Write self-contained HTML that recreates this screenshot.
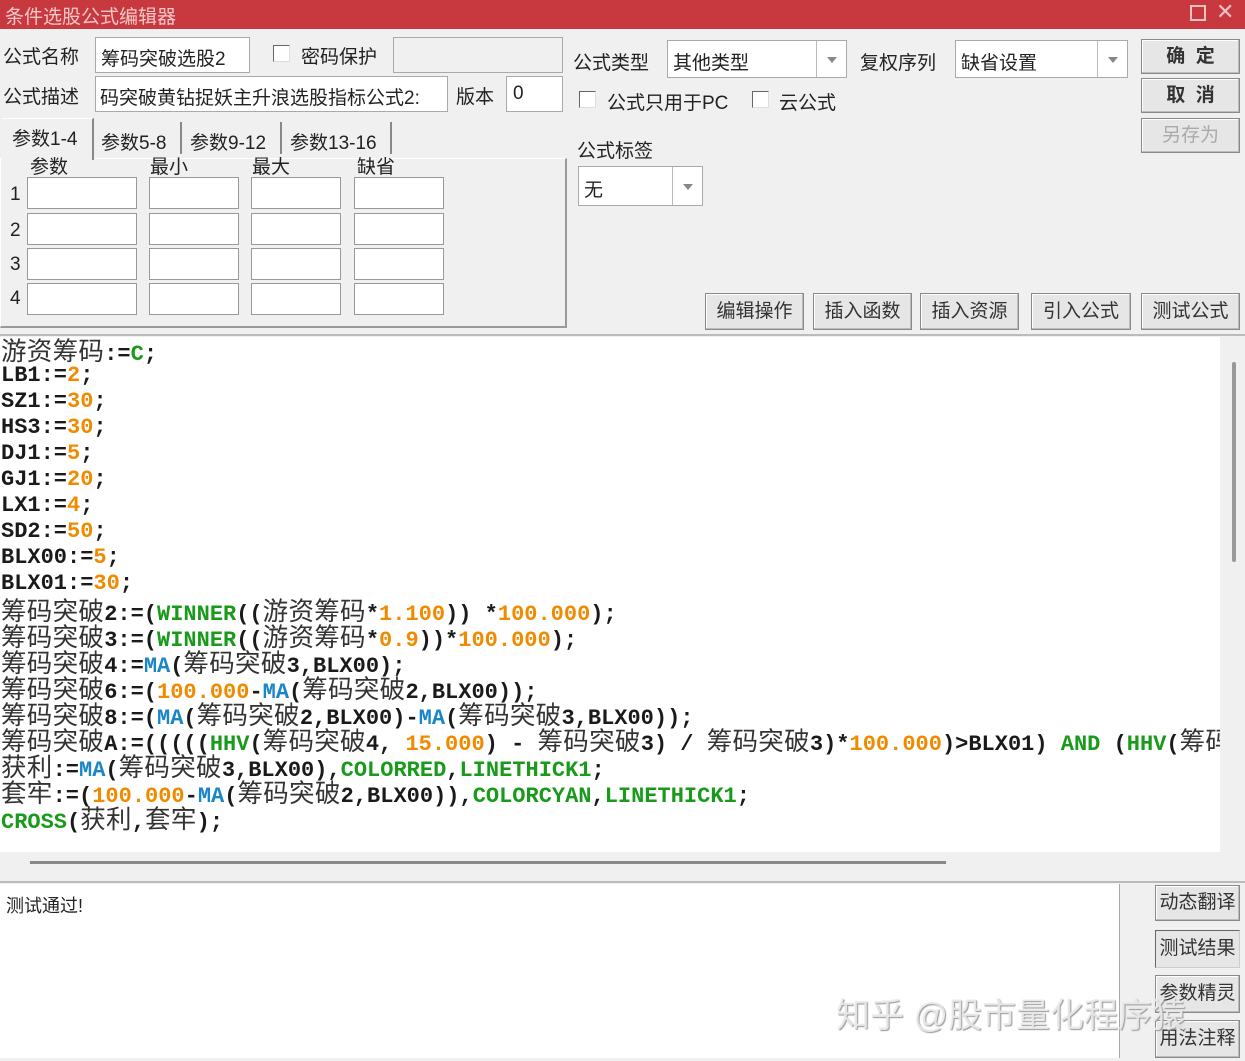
<!DOCTYPE html>
<html><head><meta charset="utf-8"><style>
*{margin:0;padding:0;box-sizing:border-box}
body{width:1245px;height:1061px;background:#f0f0f0;position:relative;overflow:hidden;font-family:"Liberation Sans","Microsoft YaHei","Noto Sans CJK SC",sans-serif;font-size:19px;color:#222}
.a{position:absolute;white-space:nowrap}
.in{position:absolute;background:#fff;border:1px solid #a9a9a9}
.btn{position:absolute;background:#e6e6e6;border:1px solid #8a8a8a;box-shadow:inset -1px -1px 0 #bdbdbd,inset 1px 1px 0 #fff;text-align:center;font-size:19px;color:#333}
.cb{position:absolute;width:17px;height:17px;border:1px solid #666;border-right-color:#ddd;border-bottom-color:#ddd;background:#fff}
.dd{position:absolute;top:0;right:0;width:30px;height:100%;border-left:1px solid #bbb}
.dd:after{content:"";position:absolute;left:10px;top:45%;border:5px solid transparent;border-top:6px solid #888}
#code{position:absolute;left:0;top:337px;width:1220px;height:515px;background:#fff;overflow:hidden;font-family:"Liberation Mono",monospace;font-weight:bold;font-size:22px;color:#1a1a1a}
#code div{height:26px;line-height:26px;white-space:nowrap;padding-left:1px;overflow:visible}
.c{font-family:"Noto Sans CJK SC",sans-serif;font-weight:normal;font-size:25.5px;color:#333;line-height:1;letter-spacing:0.3px}
.g{color:#1a9a1a}.o{color:#f08a00}.b{color:#1a86c8}
</style></head><body>
<div class="a" style="left:0;top:0;width:1245px;height:29px;background:#c8393f"></div>
<div class="a" style="left:5px;top:2px;color:#f4c8c8;font-size:19px">条件选股公式编辑器</div>
<div class="a" style="left:1190px;top:5px;width:16px;height:16px;border:2px solid #f0c0c0"></div>
<div class="a" style="left:1216px;top:-1px;color:#f0c0c0;font-size:22px">✕</div>

<div class="a" style="left:3px;top:42px">公式名称</div>
<div class="in" style="left:95px;top:37px;width:155px;height:36px"><span class="a" style="left:5px;top:6px">筹码突破选股2</span></div>
<div class="cb" style="left:273px;top:45px"></div>
<div class="a" style="left:301px;top:42px">密码保护</div>
<div class="in" style="left:393px;top:37px;width:170px;height:36px;background:#f0f0f0"></div>
<div class="a" style="left:3px;top:82px">公式描述</div>
<div class="in" style="left:95px;top:76px;width:353px;height:36px;overflow:hidden"><span class="a" style="left:4px;top:6px">码突破黄钻捉妖主升浪选股指标公式2:</span></div>
<div class="a" style="left:456px;top:82px">版本</div>
<div class="in" style="left:506px;top:76px;width:57px;height:36px"><span class="a" style="left:6px;top:6px">0</span></div>

<div class="a" style="left:0;top:158px;width:567px;height:170px;border:1px solid #fff;border-right:2px solid #999;border-bottom:2px solid #999"></div>
<div class="a" style="left:2px;top:118px;width:92px;height:42px;background:#f0f0f0;border-top:1px solid #fff;border-right:2px solid #888"></div>
<div class="a" style="left:12px;top:124px">参数1-4</div>
<div class="a" style="left:101px;top:128px">参数5-8</div>
<div class="a" style="left:180px;top:122px;height:32px;border-left:2px solid #888"></div>
<div class="a" style="left:190px;top:128px">参数9-12</div>
<div class="a" style="left:280px;top:122px;height:32px;border-left:2px solid #888"></div>
<div class="a" style="left:290px;top:128px">参数13-16</div>
<div class="a" style="left:390px;top:122px;height:32px;border-left:2px solid #888"></div>
<div class="a" style="left:30px;top:152px">参数</div>
<div class="a" style="left:150px;top:152px">最小</div>
<div class="a" style="left:252px;top:152px">最大</div>
<div class="a" style="left:357px;top:152px">缺省</div>
<div class="a" style="left:10px;top:184px">1</div>
<div class="a" style="left:10px;top:220px">2</div>
<div class="a" style="left:10px;top:254px">3</div>
<div class="a" style="left:10px;top:288px">4</div>
<div id="grid"></div>

<div class="a" style="left:573px;top:48px">公式类型</div>
<div class="in" style="left:667px;top:40px;width:180px;height:38px"><span class="a" style="left:5px;top:7px">其他类型</span><div class="dd"></div></div>
<div class="a" style="left:860px;top:48px">复权序列</div>
<div class="in" style="left:955px;top:40px;width:173px;height:38px"><span class="a" style="left:5px;top:7px">缺省设置</span><div class="dd"></div></div>
<div class="cb" style="left:579px;top:91px"></div>
<div class="a" style="left:607px;top:88px">公式只用于PC</div>
<div class="cb" style="left:752px;top:91px"></div>
<div class="a" style="left:779px;top:88px">云公式</div>
<div class="a" style="left:577px;top:136px">公式标签</div>
<div class="in" style="left:578px;top:166px;width:125px;height:40px"><span class="a" style="left:5px;top:8px">无</span><div class="dd"></div></div>

<div class="btn" style="left:1141px;top:39px;width:99px;height:35px;line-height:33px;font-weight:bold">确&nbsp; 定</div>
<div class="btn" style="left:1141px;top:78px;width:99px;height:35px;line-height:33px;font-weight:bold">取&nbsp; 消</div>
<div class="btn" style="left:1141px;top:118px;width:99px;height:35px;line-height:33px;color:#aaa">另存为</div>

<div class="btn" style="left:705px;top:293px;width:99px;height:37px;line-height:35px">编辑操作</div>
<div class="btn" style="left:813px;top:293px;width:99px;height:37px;line-height:35px">插入函数</div>
<div class="btn" style="left:920px;top:293px;width:99px;height:37px;line-height:35px">插入资源</div>
<div class="btn" style="left:1031px;top:293px;width:100px;height:37px;line-height:35px">引入公式</div>
<div class="btn" style="left:1141px;top:293px;width:99px;height:37px;line-height:35px">测试公式</div>
<div class="a" style="left:0;top:334px;width:1245px;border-top:2px solid #bbb"></div>

<div id="code">
<div><span class="c">游资筹码</span>:=<span class="g">C</span>;</div>
<div>LB1:=<span class="o">2</span>;</div>
<div>SZ1:=<span class="o">30</span>;</div>
<div>HS3:=<span class="o">30</span>;</div>
<div>DJ1:=<span class="o">5</span>;</div>
<div>GJ1:=<span class="o">20</span>;</div>
<div>LX1:=<span class="o">4</span>;</div>
<div>SD2:=<span class="o">50</span>;</div>
<div>BLX00:=<span class="o">5</span>;</div>
<div>BLX01:=<span class="o">30</span>;</div>
<div><span class="c">筹码突破</span>2:=(<span class="g">WINNER</span>((<span class="c">游资筹码</span>*<span class="o">1.100</span>)) *<span class="o">100.000</span>);</div>
<div><span class="c">筹码突破</span>3:=(<span class="g">WINNER</span>((<span class="c">游资筹码</span>*<span class="o">0.9</span>))*<span class="o">100.000</span>);</div>
<div><span class="c">筹码突破</span>4:=<span class="b">MA</span>(<span class="c">筹码突破</span>3,BLX00);</div>
<div><span class="c">筹码突破</span>6:=(<span class="o">100.000</span>-<span class="b">MA</span>(<span class="c">筹码突破</span>2,BLX00));</div>
<div><span class="c">筹码突破</span>8:=(<span class="b">MA</span>(<span class="c">筹码突破</span>2,BLX00)-<span class="b">MA</span>(<span class="c">筹码突破</span>3,BLX00));</div>
<div><span class="c">筹码突破</span>A:=(((((<span class="g">HHV</span>(<span class="c">筹码突破</span>4, <span class="o">15.000</span>) - <span class="c">筹码突破</span>3) / <span class="c">筹码突破</span>3)*<span class="o">100.000</span>)&gt;BLX01) <span class="g">AND</span> (<span class="g">HHV</span>(<span class="c">筹码</span></div>
<div><span class="c">获利</span>:=<span class="b">MA</span>(<span class="c">筹码突破</span>3,BLX00),<span class="g">COLORRED</span>,<span class="g">LINETHICK1</span>;</div>
<div><span class="c">套牢</span>:=(<span class="o">100.000</span>-<span class="b">MA</span>(<span class="c">筹码突破</span>2,BLX00)),<span class="g">COLORCYAN</span>,<span class="g">LINETHICK1</span>;</div>
<div><span class="g">CROSS</span>(<span class="c">获利</span>,<span class="c">套牢</span>);</div>
</div>
<div class="a" style="left:1232px;top:362px;width:4px;height:200px;background:#999;border-radius:2px"></div>
<div class="a" style="left:30px;top:861px;width:916px;height:3px;background:#888"></div>
<div class="a" style="left:0;top:881px;width:1245px;border-top:2px solid #bbb"></div>
<div class="a" style="left:0;top:884px;width:1120px;height:174px;background:#fff;border-right:1px solid #aaa"></div>
<div class="a" style="left:6px;top:892px;font-size:18px">测试通过!</div>
<div class="btn" style="left:1155px;top:885px;width:85px;height:36px;line-height:34px">动态翻译</div>
<div class="btn" style="left:1155px;top:930px;width:85px;height:38px;line-height:36px;border-color:#666 #ccc #ccc #666;box-shadow:none">测试结果</div>
<div class="btn" style="left:1155px;top:975px;width:85px;height:38px;line-height:36px">参数精灵</div>
<div class="btn" style="left:1155px;top:1020px;width:85px;height:38px;line-height:36px">用法注释</div>
<div class="a" style="left:836px;top:988px;font-size:34px;color:rgba(235,235,235,0.9);text-shadow:1px 1px 1px #999">知乎 @股市量化程序猿</div>
<script>
var g=document.getElementById('grid'),xs=[[27,110],[149,90],[251,90],[354,90]],ys=[177,213,248,283];
ys.forEach(function(y){xs.forEach(function(x){var d=document.createElement('div');d.className='in';d.style.cssText='left:'+x[0]+'px;top:'+y+'px;width:'+x[1]+'px;height:32px;border-color:#999';g.appendChild(d);});});
</script>
</body></html>
